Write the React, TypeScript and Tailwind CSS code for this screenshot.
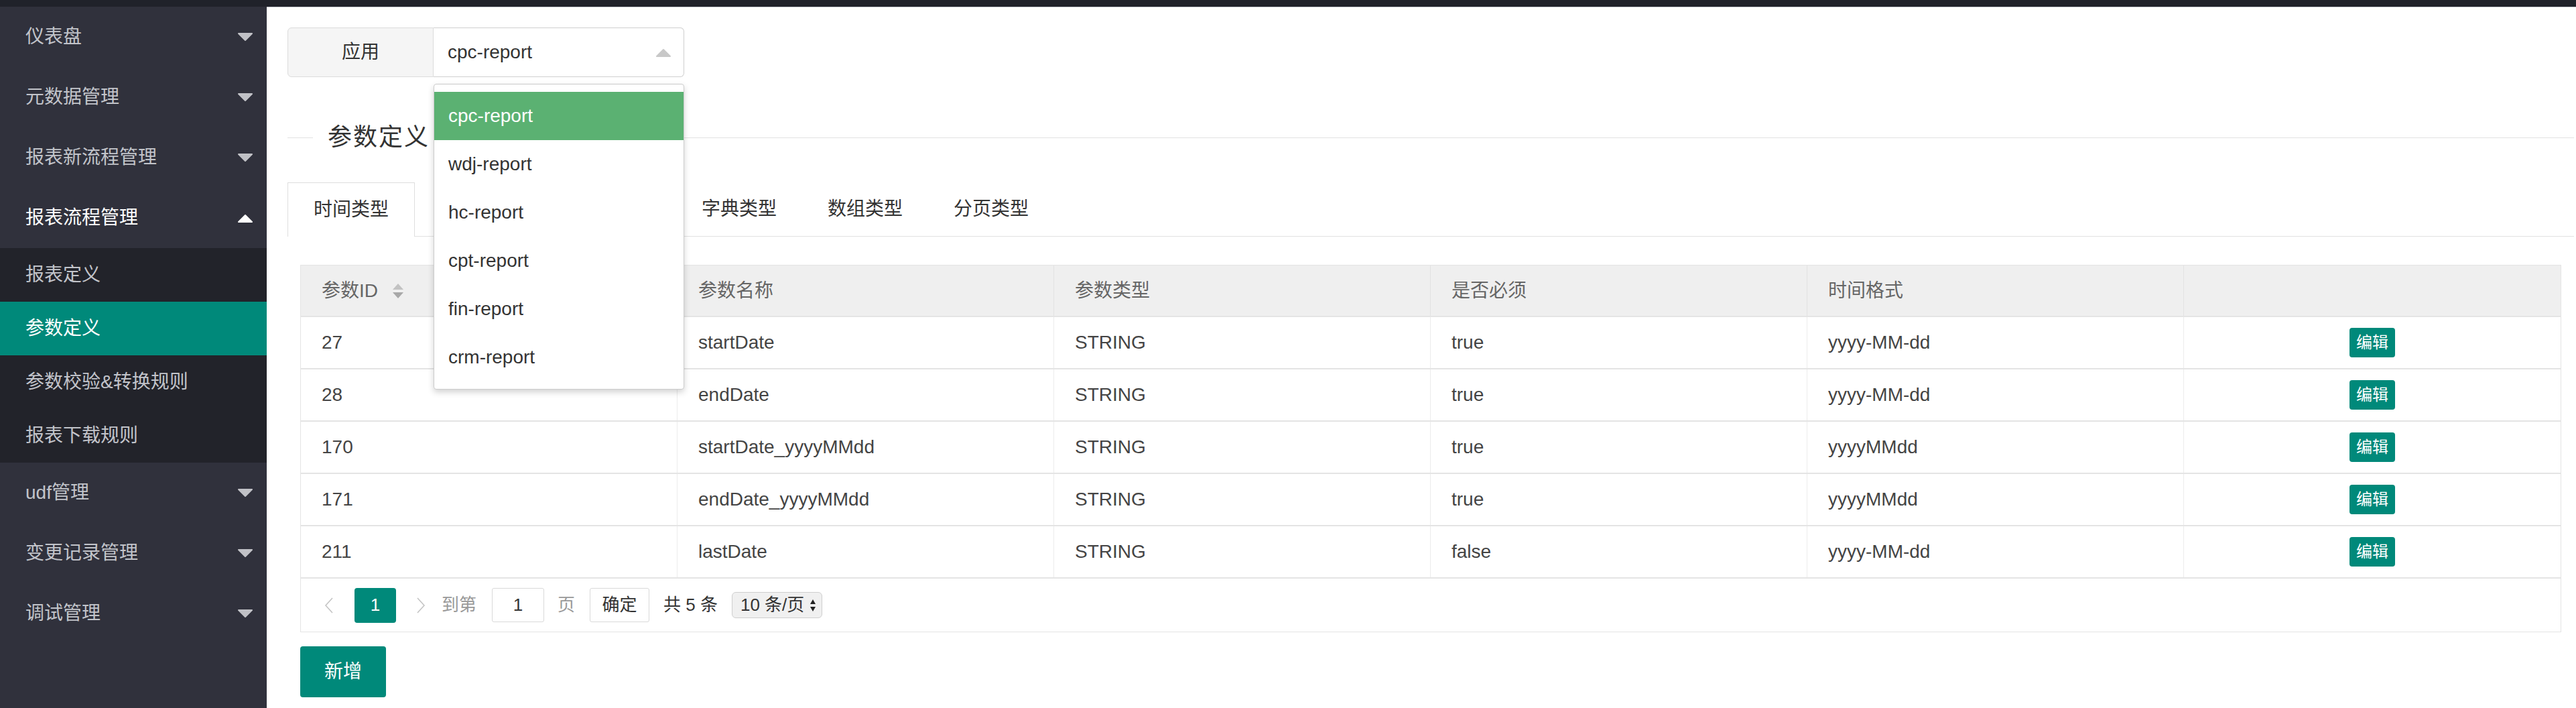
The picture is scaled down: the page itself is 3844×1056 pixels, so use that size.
import { useState } from "react";

const font = "font-['Liberation_Sans','Noto_Sans_CJK_SC',sans-serif]";

const menu = [
  { name: "仪表盘" },
  { name: "元数据管理" },
  { name: "报表新流程管理" },
  {
    name: "报表流程管理",
    open: true,
    children: ["报表定义", "参数定义", "参数校验&转换规则", "报表下载规则"],
  },
  { name: "udf管理" },
  { name: "变更记录管理" },
  { name: "调试管理" },
];

const apps = ["cpc-report", "wdj-report", "hc-report", "cpt-report", "fin-report", "crm-report"];

const rows = [
  { id: 27, name: "startDate", type: "STRING", required: "true", fmt: "yyyy-MM-dd" },
  { id: 28, name: "endDate", type: "STRING", required: "true", fmt: "yyyy-MM-dd" },
  { id: 170, name: "startDate_yyyyMMdd", type: "STRING", required: "true", fmt: "yyyyMMdd" },
  { id: 171, name: "endDate_yyyyMMdd", type: "STRING", required: "true", fmt: "yyyyMMdd" },
  { id: 211, name: "lastDate", type: "STRING", required: "false", fmt: "yyyy-MM-dd" },
];

const Caret = ({ up, color }: { up?: boolean; color: string }) => (
  <svg width="24" height="13" viewBox="0 0 24 13">
    <path
      d={up ? "M2 12 L22 12 L12 2 Z" : "M2 1 L22 1 L12 11 Z"}
      fill={color}
      stroke={color}
      strokeWidth="2"
      strokeLinejoin="round"
    />
  </svg>
);

const Chevron = ({ right }: { right?: boolean }) => (
  <svg width="14" height="24" viewBox="0 0 14 24">
    <polyline
      points={right ? "2,1 12,12 2,23" : "12,1 2,12 12,23"}
      fill="none"
      stroke="#c4c4c4"
      strokeWidth="1.6"
    />
  </svg>
);

const Sidebar = () => {
  return (
    <div className="w-[398px] h-full bg-[#30313c] shrink-0">
      {menu.map((item) => (
        <div key={item.name}>
          <div className="h-[90px] flex items-center pl-[38px] pr-[20px]">
            <span
              className={`text-[28px] ${item.open ? "text-white" : "text-[#c2c4ca]"}`}
            >
              {item.name}
            </span>
            <div className="flex-grow" />
            <Caret up={item.open} color={item.open ? "#ffffff" : "#c0c1c6"} />
          </div>
          {item.children && (
            <div className="bg-[#22232a]">
              {item.children.map((c) => (
                <div
                  key={c}
                  className={`h-[80px] flex items-center pl-[38px] text-[28px] ${
                    c === "参数定义" ? "bg-[#00897a] text-white" : "text-[#c2c4ca]"
                  }`}
                >
                  {c}
                </div>
              ))}
            </div>
          )}
        </div>
      ))}
    </div>
  );
};

const Pagination = () => (
  <div className="h-[79px] flex items-center pl-[35px] text-[26px] text-[#999]">
    <Chevron />
    <div className="ml-[31px] w-[62px] h-[52px] rounded-[4px] bg-[#00897a] text-white flex items-center justify-center">
      1
    </div>
    <div className="ml-[30px]">
      <Chevron right />
    </div>
    <span className="ml-[24px]">到第</span>
    <div className="ml-[23px] w-[78px] h-[51px] border border-[#d9d9d9] rounded-[3px] flex items-center justify-center text-[#333]">
      1
    </div>
    <span className="ml-[20px]">页</span>
    <div className="ml-[22px] w-[89px] h-[51px] border border-[#d9d9d9] rounded-[3px] flex items-center justify-center text-[#333]">
      确定
    </div>
    <span className="ml-[21px] text-[#333]">共 5 条</span>
    <div className="ml-[21px] w-[135px] h-[39px] border border-[#cfcfcf] rounded-[6px] bg-[#f0f0f0] flex items-center pl-[12px] text-[#333] gap-[8px]">
      <span>10 条/页</span>
      <svg width="10" height="22" viewBox="0 0 10 22">
        <path d="M1 9 L9 9 L5 2 Z" fill="#222" />
        <path d="M1 13 L9 13 L5 20 Z" fill="#222" />
      </svg>
    </div>
  </div>
);

const ParamTable = () => {
  const head = ["参数ID", "参数名称", "参数类型", "是否必须", "时间格式", ""];
  return (
    <div className="border border-[#e4e4e4]">
      <div className="grid grid-cols-6 h-[77px] bg-[#efefef] border-b-2 border-[#e4e4e4] text-[28px] text-[#666]">
        {head.map((h, i) => (
          <div
            key={i}
            className={`flex items-center pl-[31px] ${i < 5 ? "border-r border-[#e2e2e2]" : ""}`}
          >
            {h}
            {i === 0 && (
              <svg className="ml-[20px]" width="20" height="24" viewBox="0 0 20 24">
                <path d="M2 10 L18 10 L10 1 Z" fill="#c2c2c2" />
                <path d="M2 14 L18 14 L10 23 Z" fill="#a8a8a8" />
              </svg>
            )}
          </div>
        ))}
      </div>
      {rows.map((r) => (
        <div
          key={r.id}
          className="grid grid-cols-6 h-[78px] border-b-2 border-[#e4e4e4] text-[28px] text-[#444]"
        >
          <div className="flex items-center pl-[31px] border-r border-[#ececec]">{r.id}</div>
          <div className="flex items-center pl-[31px] border-r border-[#ececec]">{r.name}</div>
          <div className="flex items-center pl-[31px] border-r border-[#ececec]">{r.type}</div>
          <div className="flex items-center pl-[31px] border-r border-[#ececec]">{r.required}</div>
          <div className="flex items-center pl-[31px] border-r border-[#ececec]">{r.fmt}</div>
          <div className="flex items-center justify-center">
            <div className="w-[68px] h-[44px] rounded-[4px] bg-[#00897a] text-white text-[24px] flex items-center justify-center">
              编辑
            </div>
          </div>
        </div>
      ))}
      <Pagination />
    </div>
  );
};

const App = () => {
  const [app] = useState("cpc-report");
  const tabs = ["字典类型", "数组类型", "分页类型"];

  return (
    <div className={`w-[3844px] h-[1056px] flex flex-col overflow-hidden ${font}`}>
      <div className="h-[10px] bg-[#20222a] shrink-0" />

      <div className="flex flex-1 min-h-0">
        <Sidebar />

        <div className="relative flex-1 bg-white border-t border-[#c7c9ce] pl-[31px] pr-[3px] pt-[30px]">
          {/* App select */}
          <div className="flex h-[74px] text-[28px] text-[#333]">
            <div className="w-[218px] bg-[#f5f5f5] border border-[#dcdcdc] rounded-l-[6px] flex items-center justify-center">
              应用
            </div>
            <div className="w-[374px] border border-l-0 border-[#cfcfcf] rounded-r-[6px] flex items-center pl-[21px] pr-[18px]">
              <span>{app}</span>
              <div className="flex-grow" />
              <Caret up color="#c8c8c8" />
            </div>
          </div>

          {/* Legend title */}
          <div className="mt-[70px] h-[40px] flex items-center">
            <div className="w-[38px] h-px bg-[#e2e2e2]" />
            <span className="mx-[22px] text-[36px] text-[#333] leading-[40px] tracking-[2px]">参数定义</span>
            <div className="flex-1 h-px bg-[#e2e2e2]" />
          </div>

          {/* Tabs (two tabs sit under the open dropdown) */}
          <div className="mt-[48px] h-[80px] flex items-end border-b border-[#e2e2e2] text-[28px] text-[#333]">
            <div className="h-[81px] -mb-px px-[38px] flex items-center bg-white border border-b-0 border-[#dedede]">
              时间类型
            </div>
            <div className="w-[390px] h-[80px]" />
            {tabs.map((t) => (
              <div key={t} className="h-[80px] flex items-center px-[38px]">
                {t}
              </div>
            ))}
          </div>

          {/* Table */}
          <div className="px-[19px] mt-[42px]">
            <ParamTable />
            <div className="mt-[21px] w-[128px] h-[76px] rounded-[4px] bg-[#00897a] text-white text-[28px] flex items-center justify-center">
              新增
            </div>
          </div>

          {/* Open dropdown */}
          <div className="absolute left-[249px] top-[114px] w-[374px] py-[11px] bg-white border border-[#cccccc] rounded-[4px] shadow-[0_4px_10px_rgba(0,0,0,0.18)] text-[28px] text-[#333]">
            {apps.map((a) => (
              <div
                key={a}
                className={`h-[72px] flex items-center pl-[21px] ${
                  a === app ? "bg-[#5bb172] text-white" : ""
                }`}
              >
                {a}
              </div>
            ))}
          </div>
        </div>
      </div>
    </div>
  );
};

export default App;
